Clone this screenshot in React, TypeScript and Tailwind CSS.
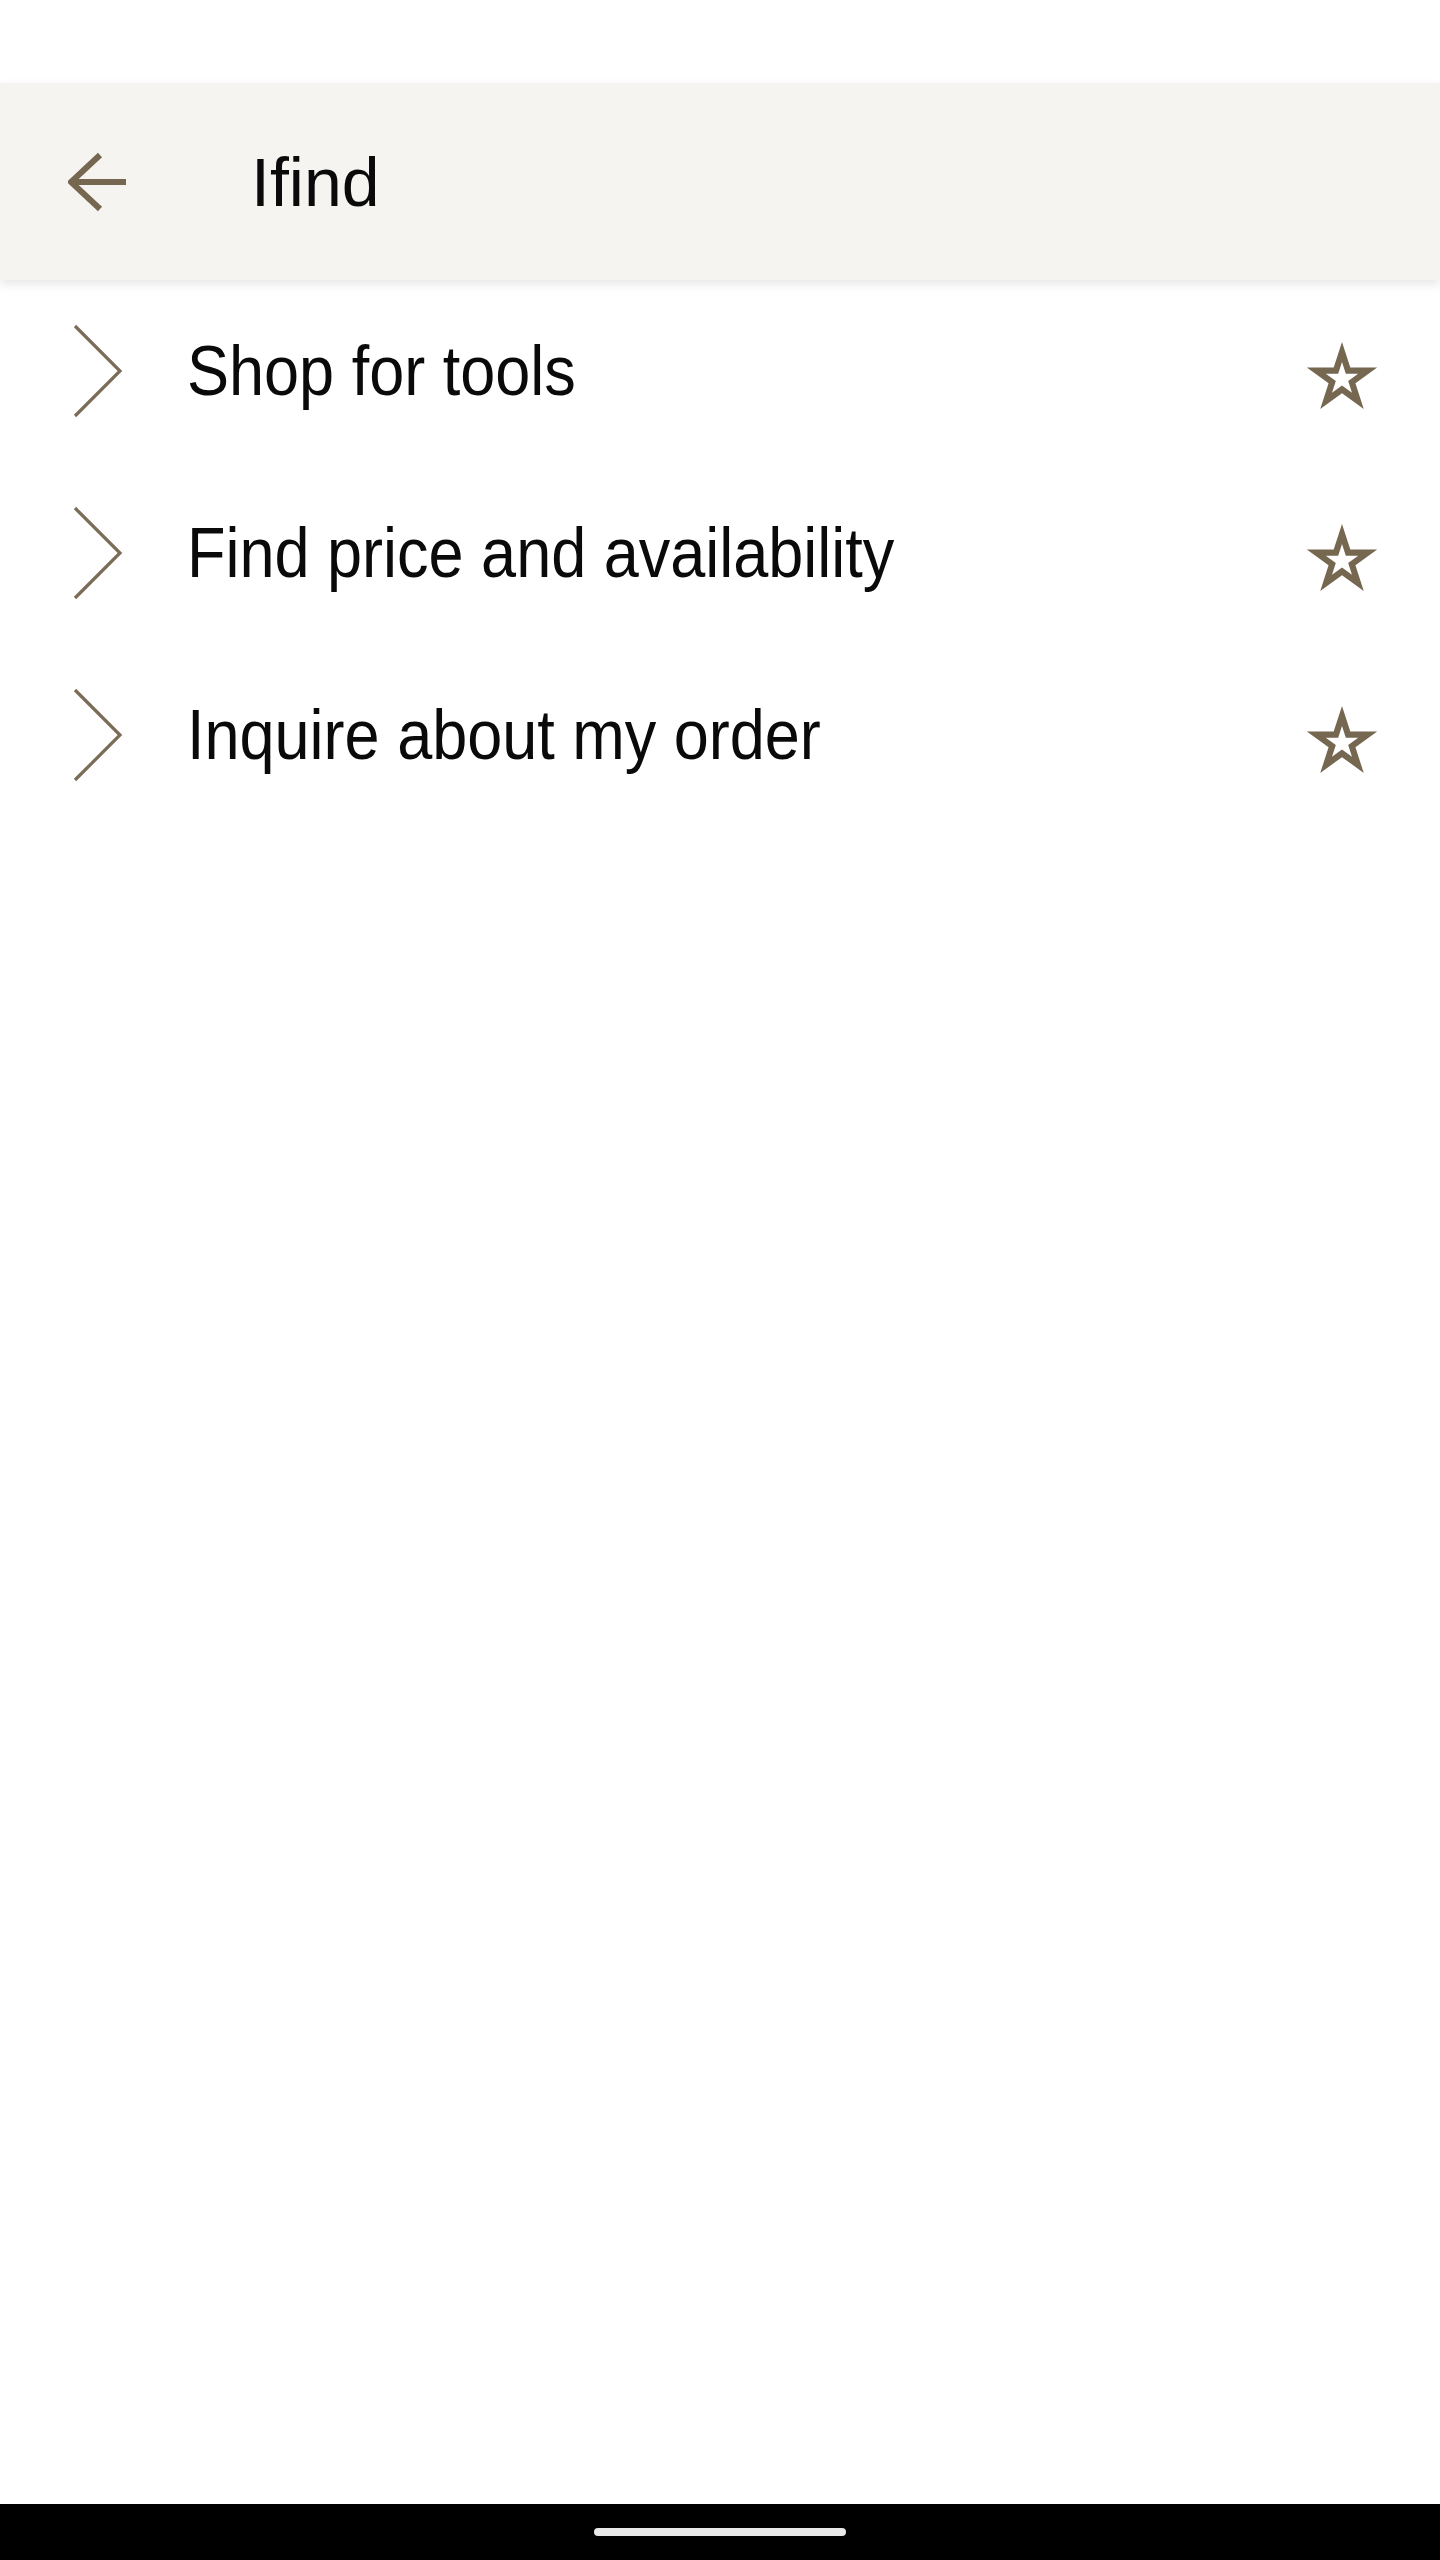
import React from "react";

const ITEMS = ["Shop for tools", "Find price and availability", "Inquire about my order"];

// regular five-point star, outer radius R, inner vertices at 0.382R
function starPath(cx: number, cy: number, R: number) {
  const pts: string[] = [];
  for (let i = 0; i < 10; i++) {
    const a = ((-90 + i * 36) * Math.PI) / 180;
    const r = i % 2 === 0 ? R : R * 0.382;
    pts.push(`${(cx + r * Math.cos(a)).toFixed(2)} ${(cy + r * Math.sin(a)).toFixed(2)}`);
  }
  return "M" + pts.join(" L") + " Z";
}

function BackArrow() {
  return (
    <svg width="60" height="60" viewBox="0 0 60 60" fill="none">
      <path d="M32 3 L3 30 L32 57" stroke="#766751" strokeWidth="6" strokeLinejoin="miter" />
      <path d="M4 30 H58" stroke="#766751" strokeWidth="6" />
    </svg>
  );
}

function Chevron() {
  return (
    <svg width="52" height="96" viewBox="0 0 52 96" fill="none">
      <path d="M3 3 L48 48 L3 93" stroke="#7a6c57" strokeWidth="3.2" strokeLinejoin="miter" />
    </svg>
  );
}

function StarOutline() {
  return (
    <svg width="76" height="72" viewBox="0 0 76 72">
      <path
        d={starPath(38, 39, 37) + " " + starPath(38, 39, 17)}
        fill="#766751"
        fillRule="evenodd"
      />
    </svg>
  );
}

export default function App() {
  return (
    <div className="min-h-[2560px] flex flex-col bg-white font-['Liberation_Sans',Arial,sans-serif] text-[#0a0a0a]">
      <div className="h-[83px] bg-white" />

      <header className="relative z-10 h-[197px] bg-[#f5f4f1] shadow-[0_4px_10px_rgba(0,0,0,0.10)] flex items-center">
        <button className="ml-[68px] w-[60px] h-[60px] flex items-center" aria-label="Back">
          <BackArrow />
        </button>
        <h1 className="ml-[123px] text-[68px] leading-none font-normal">Ifind</h1>
      </header>

      <ul className="flex flex-col">
        {ITEMS.map((item) => (
          <li key={item} className="h-[182px] flex items-center pl-[72px] pr-[60px]">
            <Chevron />
            <div className="ml-[63px] flex-1">
              <span className="inline-block origin-left scale-x-[0.9] text-[70px] leading-none whitespace-nowrap">
                {item}
              </span>
            </div>
            <button className="mt-[10px]" aria-label="Add to favourites">
              <StarOutline />
            </button>
          </li>
        ))}
      </ul>

      <div className="flex-1" />

      <div className="h-[56px] bg-black flex items-center justify-center">
        <div className="w-[252px] h-[8px] rounded-full bg-[#e8e8e8]" />
      </div>
    </div>
  );
}
